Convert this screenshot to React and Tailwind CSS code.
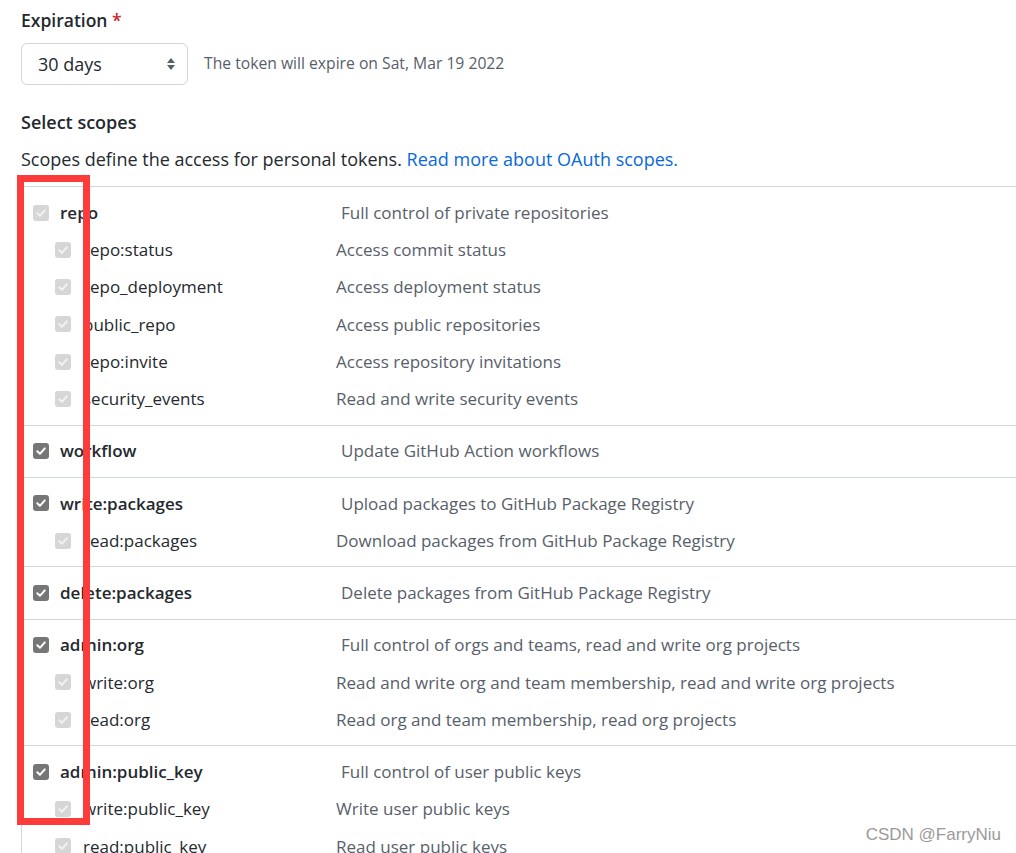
const groups = [
  {
    name: 'repo',
    desc: 'Full control of private repositories',
    checked: false,
    children: [
      ['repo:status', 'Access commit status'],
      ['repo_deployment', 'Access deployment status'],
      ['public_repo', 'Access public repositories'],
      ['repo:invite', 'Access repository invitations'],
      ['security_events', 'Read and write security events'],
    ],
  },
  { name: 'workflow', desc: 'Update GitHub Action workflows', checked: true, children: [] },
  {
    name: 'write:packages',
    desc: 'Upload packages to GitHub Package Registry',
    checked: true,
    children: [['read:packages', 'Download packages from GitHub Package Registry']],
  },
  { name: 'delete:packages', desc: 'Delete packages from GitHub Package Registry', checked: true, children: [] },
  {
    name: 'admin:org',
    desc: 'Full control of orgs and teams, read and write org projects',
    checked: true,
    children: [
      ['write:org', 'Read and write org and team membership, read and write org projects'],
      ['read:org', 'Read org and team membership, read org projects'],
    ],
  },
  {
    name: 'admin:public_key',
    desc: 'Full control of user public keys',
    checked: true,
    children: [
      ['write:public_key', 'Write user public keys'],
      ['read:public_key', 'Read user public keys'],
    ],
  },
];

const Check = ({ on }) => (
  <span
    className={`flex w-4 h-4 shrink-0 items-center justify-center rounded-[3px] ${
      on ? 'bg-[#767676]' : 'bg-[#d6d6d6]'
    }`}
  >
    <svg width="12" height="12" viewBox="0 0 12 12">
      <path
        d="M2.3 6.3 L4.9 8.8 L9.8 3.4"
        fill="none"
        stroke={on ? '#ffffff' : '#f2f2f2'}
        strokeWidth="2"
        strokeLinecap="round"
        strokeLinejoin="round"
      />
    </svg>
  </span>
);

const ScopeGroup = ({ group }) => (
  <div className="border-t border-[#d0d7de] pt-[7px] pb-[7px]">
    <div className="flex items-center h-[37.25px]">
      <div className="flex items-center w-[319px] pl-[11px]">
        <Check on={group.checked} />
        <span className="ml-[11px] font-semibold text-[#24292f]">{group.name}</span>
      </div>
      <span className="text-[#57606a]">{group.desc}</span>
    </div>
    {group.children.map(([name, desc]) => (
      <div key={name} className="flex items-center h-[37.25px]">
        <div className="flex items-center w-[314px] pl-[33px]">
          <Check on={false} />
          <span className="ml-[12px] text-[#24292f]">{name}</span>
        </div>
        <span className="text-[#57606a]">{desc}</span>
      </div>
    ))}
  </div>
);

export default function App() {
  return (
    <div className="relative h-[853px] overflow-hidden bg-white font-['Open_Sans',sans-serif] text-[17px] text-[#24292f]">
      <div className="pl-[21px] pt-[6px]">
        <div className="text-[17.5px] font-semibold leading-[28px]">
          Expiration <span className="text-[#cf222e]">*</span>
        </div>
        <div className="flex items-center gap-4 mt-[9px]">
          <div className="flex items-center justify-between w-[167px] h-[42px] pl-[16px] pr-[10px] border border-[#d0d7de] rounded-md">
            <span className="text-[18px]">30 days</span>
            <svg width="12" height="16" viewBox="0 0 12 16">
              <path d="M6 2 L10 7 L2 7 Z M2 9 L10 9 L6 14 Z" fill="#57606a" />
            </svg>
          </div>
          <span className="text-[15.7px] text-[#57606a]">The token will expire on Sat, Mar 19 2022</span>
        </div>
        <div className="mt-[23px] text-[18px] font-semibold leading-[28px]">Select scopes</div>
        <div className="mt-[9px] text-[18px] leading-[28px]">
          Scopes define the access for personal tokens.{' '}
          <span className="text-[#0969da]">Read more about OAuth scopes.</span>
        </div>
        <div className="mt-[13px] w-[1100px] border-l border-[#d0d7de]">
          {groups.map((g) => (
            <ScopeGroup key={g.name} group={g} />
          ))}
        </div>
      </div>
      <div className="absolute left-[17px] top-[175px] w-[73px] h-[650px] border-[7px] border-[#fd3b3b]" />
      <div className="absolute right-[15px] top-[822px] font-['Liberation_Sans',sans-serif] text-[17px] text-[#9a9a9a]">
        CSDN @FarryNiu
      </div>
    </div>
  );
}
